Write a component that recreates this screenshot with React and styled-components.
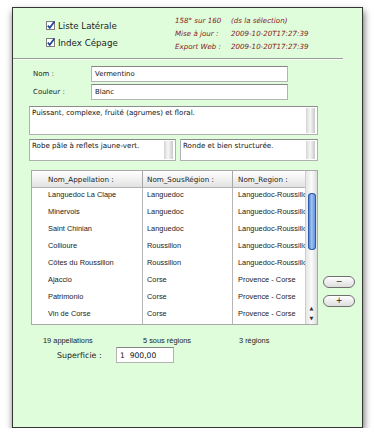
import styled, { createGlobalStyle } from 'styled-components';

const GlobalStyle = createGlobalStyle`
  html, body {
    margin: 0;
    background: #ffffff;
  }
  body {
    font-family: 'DejaVu Sans', 'Liberation Sans', sans-serif;
    color: #1e1e1e;
  }
`;

const Page = styled.div`
  padding: 7px 0 0 12px;
`;

const Window = styled.div`
  box-sizing: border-box;
  width: 351px;
  height: 421px;
  border: 1px solid #353535;
  background: #dffcdb;
  box-shadow: 1px 4px 7px rgba(0, 0, 0, 0.6);
`;

const Header = styled.div`
  display: flex;
  height: 50px;
  margin-right: 19px;
  border-bottom: 1px solid #9c9c9c;
  box-shadow: 0 1px 0 #f4fff2;
  padding-left: 33px;
`;

const Checks = styled.div`
  width: 129px;
  padding-top: 9px;
`;

const CheckRow = styled.label`
  display: flex;
  align-items: center;
  gap: 3px;
  height: 17px;
  font-size: 8.7px;
  color: #1c1c1c;
`;

const Info = styled.div`
  display: grid;
  grid-template-columns: 56px auto;
  grid-auto-rows: 13px;
  align-items: center;
  padding-top: 6px;
  font-size: 7.1px;
  font-style: italic;
  color: #86201c;
`;

const Body = styled.div`
  padding-left: 16px;
`;

const FieldRow = styled.div`
  display: flex;
  align-items: center;
  height: 16px;
  margin-top: ${({ $top }) => $top}px;
`;

const Label = styled.span`
  box-sizing: border-box;
  width: ${({ $w }) => $w}px;
  padding-left: ${({ $pad }) => $pad}px;
  font-size: ${({ $size }) => $size || 7}px;
  color: #1c1c1c;
`;

const Input = styled.div`
  box-sizing: border-box;
  width: ${({ $w }) => $w}px;
  height: 16px;
  padding: 0 3px;
  display: flex;
  align-items: center;
  background: #ffffff;
  border: 1px solid #b4b4b4;
  border-top-color: #858585;
  font-size: ${({ $size }) => $size || 6.9}px;
  color: #111;
`;

const TextBox = styled.div`
  box-sizing: border-box;
  display: flex;
  width: ${({ $w }) => $w}px;
  height: ${({ $h }) => $h}px;
  margin-top: ${({ $top }) => $top || 0}px;
  background: #ffffff;
  border: 1px solid #b0b0b0;
  border-top-color: #8c8c8c;
`;

const TextContent = styled.div`
  flex: 1;
  padding: 1px 2px;
  font-size: 7.1px;
  color: #111;
`;

const Strip = styled.div`
  width: 9px;
  margin: 1px 2px 1px 0;
  background: linear-gradient(90deg, #d4d4d4, #f7f7f7 45%, #c9c9c9);
`;

const SmallRow = styled.div`
  display: flex;
  gap: 4px;
  margin-top: 4px;
`;

const TableArea = styled.div`
  display: flex;
  margin-top: 9px;
  padding-left: 2px;
`;

const Table = styled.div`
  box-sizing: border-box;
  display: flex;
  width: 287px;
  height: 155px;
  background: #ffffff;
  border: 1px solid #a9a9a9;
`;

const Grid = styled.div`
  flex: 1;
  display: grid;
  grid-template-columns: 111px 90px 1fr;
  grid-template-rows: 17px;
  grid-auto-rows: 17px;
`;

const HeadCell = styled.div`
  display: flex;
  align-items: center;
  padding-left: ${({ $pad }) => $pad}px;
  font-size: 7.2px;
  color: #1a1a1a;
  background: linear-gradient(#ffffff, #f1f1f1 50%, #e2e2e2);
  border-bottom: 1px solid #b2b2b2;
  border-right: ${({ $last }) => ($last ? 'none' : '1px solid #a8a8a8')};
`;

const Cell = styled.div`
  display: flex;
  align-items: center;
  padding-left: ${({ $pad }) => $pad}px;
  padding-bottom: 5px;
  font-family: 'Liberation Sans', Arial, sans-serif;
  font-size: 7.4px;
  color: #222;
  white-space: nowrap;
  overflow: hidden;
  border-right: ${({ $last }) => ($last ? 'none' : '1px solid #b6b6b6')};
`;

const Scroll = styled.div`
  width: 11px;
  display: flex;
  flex-direction: column;
  align-items: center;
  background: linear-gradient(90deg, #e6e6e6, #fbfbfb 50%, #dcdcdc);
  border-left: 1px solid #cfcfcf;
`;

const Thumb = styled.div`
  width: 8px;
  height: 57px;
  margin-top: 22px;
  border-radius: 4px;
  background: linear-gradient(90deg, #3b6fc2, #9fc3f2 45%, #4f85d6);
  box-shadow: inset 0 0 0 1px #2d5aa8;
`;

const Arrows = styled.div`
  margin-top: auto;
  display: flex;
  flex-direction: column;
  align-items: center;
  gap: 4px;
  padding-bottom: 3px;
  font-size: 5px;
  color: #333;
`;

const Buttons = styled.div`
  display: flex;
  flex-direction: column;
  justify-content: flex-end;
  gap: 7px;
  margin-left: 5px;
  padding-bottom: 18px;
`;

const PillButton = styled.div`
  box-sizing: border-box;
  width: 32px;
  height: 12px;
  display: flex;
  align-items: center;
  justify-content: center;
  border: 1px solid #6f6f6f;
  border-radius: 6px;
  background: linear-gradient(#ffffff, #ececec 55%, #dedede);
  font-size: 8px;
  line-height: 1;
  color: #222;
`;

const Counts = styled.div`
  display: grid;
  grid-template-columns: 100px 96px auto;
  height: 11px;
  margin-top: 10px;
  padding-left: 14px;
  align-items: center;
  font-family: 'Liberation Sans', Arial, sans-serif;
  font-size: 7.4px;
  color: #222;
`;

const rows = [
  ['Languedoc La Clape', 'Languedoc', 'Languedoc-Roussillon'],
  ['Minervois', 'Languedoc', 'Languedoc-Roussillon'],
  ['Saint Chinian', 'Languedoc', 'Languedoc-Roussillon'],
  ['Collioure', 'Roussillon', 'Languedoc-Roussillon'],
  ['Côtes du Roussillon', 'Roussillon', 'Languedoc-Roussillon'],
  ['Ajaccio', 'Corse', 'Provence - Corse'],
  ['Patrimonio', 'Corse', 'Provence - Corse'],
  ['Vin de Corse', 'Corse', 'Provence - Corse'],
];

const CheckBox = () => (
  <svg width="9" height="9" viewBox="0 0 9 9">
    <rect x="0.5" y="0.5" width="8" height="8" fill="#fff" stroke="#7d7d7d" />
    <path d="M1.8 4.6 L3.8 6.9 L8.6 0.4" fill="none" stroke="#27479a" strokeWidth="1.8" />
  </svg>
);

const App = () => (
  <Page>
    <GlobalStyle />
    <Window>
      <Header>
        <Checks>
          <CheckRow>
            <CheckBox />
            Liste Latérale
          </CheckRow>
          <CheckRow>
            <CheckBox />
            Index Cépage
          </CheckRow>
        </Checks>
        <Info>
          <span>158° sur 160</span>
          <span>(ds la sélection)</span>
          <span>Mise à jour :</span>
          <span>2009-10-20T17:27:39</span>
          <span>Export Web :</span>
          <span>2009-10-20T17:27:39</span>
        </Info>
      </Header>

      <Body>
        <FieldRow $top={7}>
          <Label $w={62} $pad={4}>Nom :</Label>
          <Input $w={197}>Vermentino</Input>
        </FieldRow>
        <FieldRow $top={2}>
          <Label $w={62} $pad={4}>Couleur :</Label>
          <Input $w={197}>Blanc</Input>
        </FieldRow>

        <TextBox $w={289} $h={29} $top={6}>
          <TextContent>Puissant, complexe, fruité (agrumes) et floral.</TextContent>
          <Strip />
        </TextBox>

        <SmallRow>
          <TextBox $w={147} $h={22}>
            <TextContent>Robe pâle à reflets jaune-vert.</TextContent>
            <Strip />
          </TextBox>
          <TextBox $w={138} $h={22}>
            <TextContent>Ronde et bien structurée.</TextContent>
            <Strip />
          </TextBox>
        </SmallRow>

        <TableArea>
          <Table>
            <Grid>
              <HeadCell $pad={16}>Nom_Appellation :</HeadCell>
              <HeadCell $pad={4}>Nom_SousRégion :</HeadCell>
              <HeadCell $pad={5} $last>Nom_Region :</HeadCell>
              {rows.flatMap(([a, b, c]) => [
                <Cell key={a + '1'} $pad={16}>{a}</Cell>,
                <Cell key={a + '2'} $pad={4}>{b}</Cell>,
                <Cell key={a + '3'} $pad={5} $last>{c}</Cell>,
              ])}
            </Grid>
            <Scroll>
              <Thumb />
              <Arrows>
                <span>▲</span>
                <span>▼</span>
              </Arrows>
            </Scroll>
          </Table>
          <Buttons>
            <PillButton>−</PillButton>
            <PillButton>+</PillButton>
          </Buttons>
        </TableArea>

        <Counts>
          <span>19 appellations</span>
          <span>5 sous régions</span>
          <span>3 régions</span>
        </Counts>

        <FieldRow $top={1}>
          <Label $w={87} $pad={28} $size={7.9}>Superficie :</Label>
          <Input $w={58} $size={7.6}>1&nbsp;&nbsp;900,00</Input>
        </FieldRow>
      </Body>
    </Window>
  </Page>
);

export default App;
